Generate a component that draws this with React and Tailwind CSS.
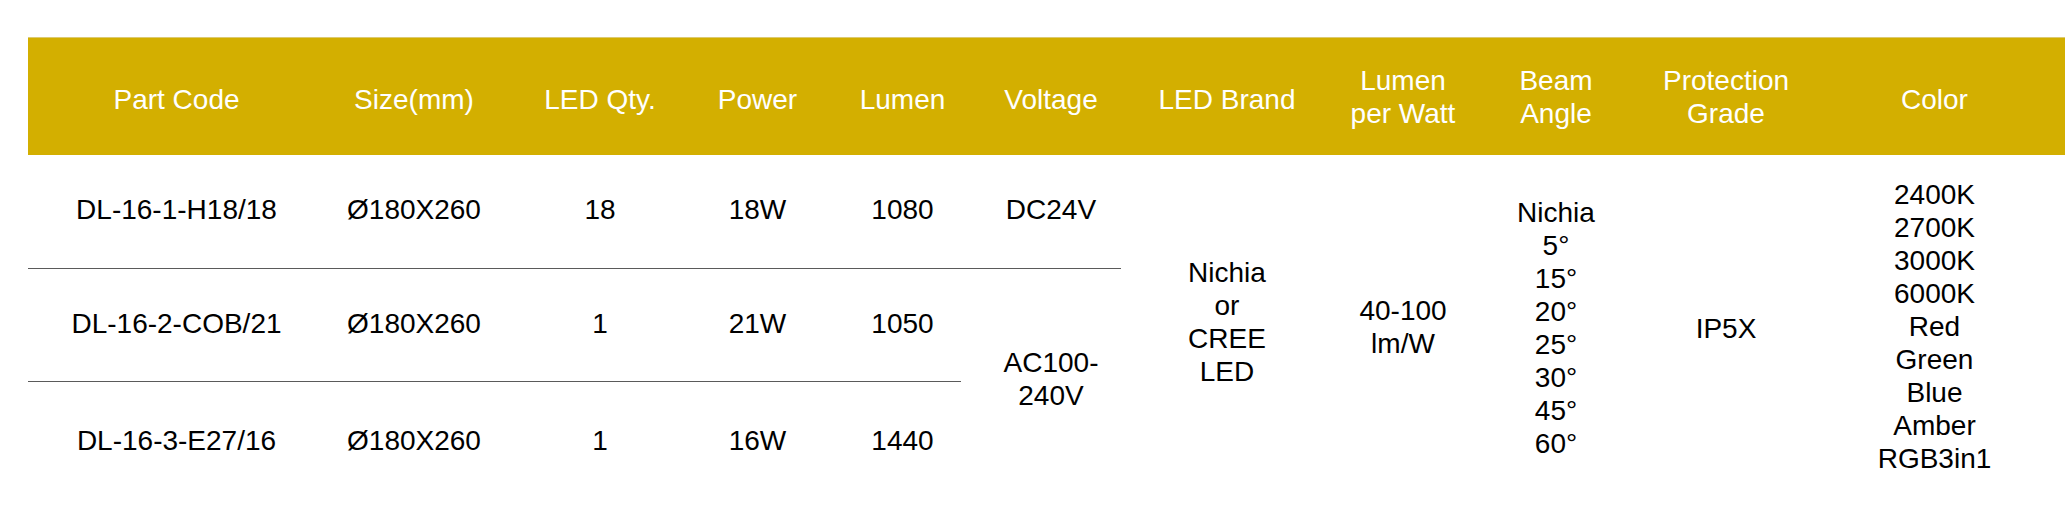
import React from "react";

const cols =
  "grid-cols-[297px_178px_194px_121px_143px_160px_212px_140px_166px_193px_205px]";

const headers = [
  { label: ["Part Code"] },
  { label: ["Size(mm)"] },
  { label: ["LED Qty."] },
  { label: ["Power"] },
  { label: ["Lumen"], cls: "pl-[26px]" },
  { label: ["Voltage"], cls: "pl-[20px]" },
  { label: ["LED Brand"] },
  { label: ["Lumen", "per Watt"] },
  { label: ["Beam", "Angle"] },
  { label: ["Protection", "Grade"], cls: "pr-[19px]" },
  { label: ["Color"] },
];

const rows = [
  { code: "DL-16-1-H18/18", qty: "18", power: "18W", lumen: "1080" },
  { code: "DL-16-2-COB/21", qty: "1", power: "21W", lumen: "1050" },
  { code: "DL-16-3-E27/16", qty: "1", power: "16W", lumen: "1440" },
];

const angles = ["Nichia", "5°", "15°", "20°", "25°", "30°", "45°", "60°"];
const colors = [
  "2400K",
  "2700K",
  "3000K",
  "6000K",
  "Red",
  "Green",
  "Blue",
  "Amber",
  "RGB3in1",
];

const rowPad = ["pb-[5px]", "pb-[3px]", "pt-[4px]"];
const rowStart = ["row-start-1", "row-start-2", "row-start-3"];
const line = "border-b border-[#5a5a5a]";

const Cell = ({ className = "", children }) => (
  <div className={`flex flex-col items-center justify-center text-center ${className}`}>
    {children}
  </div>
);

const App = () => {
  return (
    <div className="w-[2065px] h-[516px] bg-white pl-[28px] pt-[37px] font-['Liberation_Sans',Arial,sans-serif] text-[28px] leading-[33px]">
      {/* header band */}
      <div className={`grid ${cols} h-[118px] bg-[#d3af00] border-t border-[#dcca72] text-white`}>
        {headers.map((h, i) => (
          <Cell
            key={i}
            className={`${h.cls || ""} ${h.label.length === 1 ? "pt-[5px]" : ""}`}
          >
            {h.label.map((l) => (
              <span key={l} className="whitespace-nowrap">
                {l}
              </span>
            ))}
          </Cell>
        ))}
      </div>

      {/* body */}
      <div className={`grid ${cols} grid-rows-[114px_113px_113px] text-black`}>
        {rows.map((r, i) => {
          const border = i < 2 ? line : "";
          const base = `${rowStart[i]} ${rowPad[i]} ${border}`;
          return (
            <React.Fragment key={r.code}>
              <Cell className={`col-start-1 ${base}`}>{r.code}</Cell>
              <Cell className={`col-start-2 ${base}`}>Ø180X260</Cell>
              <Cell className={`col-start-3 ${base}`}>{r.qty}</Cell>
              <Cell className={`col-start-4 ${base}`}>{r.power}</Cell>
              <Cell className={`col-start-5 pl-[26px] ${base}`}>{r.lumen}</Cell>
            </React.Fragment>
          );
        })}

        {/* voltage */}
        <Cell className={`col-start-6 row-start-1 pl-[20px] pb-[5px] ${line}`}>DC24V</Cell>
        <Cell className="col-start-6 row-start-2 row-span-2 pl-[20px] pb-[6px]">
          <span>AC100-</span>
          <span>240V</span>
        </Cell>

        {/* shared columns */}
        <Cell className="col-start-7 row-start-1 row-span-3 pb-[6px]">
          <span>Nichia</span>
          <span>or</span>
          <span>CREE</span>
          <span>LED</span>
        </Cell>
        <Cell className="col-start-8 row-start-1 row-span-3 pt-[4px]">
          <span>40-100</span>
          <span>lm/W</span>
        </Cell>
        <Cell className="col-start-9 row-start-1 row-span-3 pt-[6px]">
          {angles.map((a) => (
            <span key={a}>{a}</span>
          ))}
        </Cell>
        <Cell className="col-start-10 row-start-1 row-span-3 pt-[6px] pr-[19px]">IP5X</Cell>
        <Cell className="col-start-11 row-start-1 row-span-3 pt-[3px]">
          {colors.map((c) => (
            <span key={c}>{c}</span>
          ))}
        </Cell>
      </div>
    </div>
  );
};

export default App;
